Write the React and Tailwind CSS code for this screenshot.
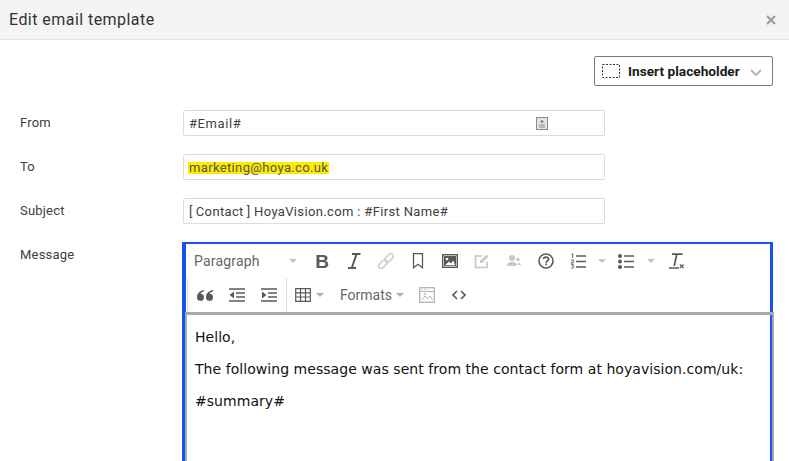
const Caret = ({ light }) => (
  <span className={`block w-0 h-0 border-x-4 border-x-transparent border-t-4 ${light ? 'border-t-[#c4c4c4]' : 'border-t-[#b0b0b0]'}`} />
);

const Ico = ({ children, w = 16, h = 16, cls = 'text-[#595959]' }) => (
  <svg width={w} height={h} viewBox={`0 0 ${w} ${h}`} className={cls} fill="none">
    {children}
  </svg>
);

const ToolBtn = ({ children, w = 'w-8' }) => (
  <div className={`${w} h-[34px] flex items-center justify-center shrink-0`}>{children}</div>
);

const Bold = () => (
  <span className="font-['Liberation_Sans',sans-serif] font-bold text-[19px] leading-none text-[#595959]">B</span>
);

const Italic = () => (
  <Ico w={14} h={16}>
    <path d="M5 1h8.500M1 15h8M9.600 1 4.800 15" stroke="currentColor" strokeWidth="2" />
  </Ico>
);

const LinkIcon = () => (
  <Ico cls="text-[#cfcfcf]">
    <g transform="rotate(-45 8 8)" stroke="currentColor" strokeWidth="1.600">
      <rect x="-1.500" y="5.500" width="10" height="5" rx="2.500" />
      <rect x="7.500" y="5.500" width="10" height="5" rx="2.500" />
    </g>
  </Ico>
);

const Bookmark = () => (
  <Ico w={12} h={16}>
    <path d="M1.500.7h9v14L6 11.200 1.500 14.700z" stroke="currentColor" strokeWidth="1.300" />
  </Ico>
);

const ImageIcon = () => (
  <Ico>
    <rect x="0.700" y="1.700" width="14.600" height="12.600" stroke="currentColor" strokeWidth="1.400" />
    <path d="M2 13V3h12v10z" fill="currentColor" />
    <circle cx="5" cy="6" r="1.300" fill="#fff" />
    <path d="M3 12.200 7 8.500l2 2 2.300-3L13.200 12.200z" fill="#fff" />
  </Ico>
);

const EditIcon = () => (
  <Ico cls="text-[#c8c8c8]">
    <path d="M13 8.500V14.500H1.500V3H8" stroke="currentColor" strokeWidth="1.700" />
    <path d="M6 8 12.500 1.500l2 2L8 10H6z" fill="currentColor" />
  </Ico>
);

const People = () => (
  <Ico cls="text-[#c8c8c8]">
    <circle cx="6" cy="5" r="3" fill="currentColor" />
    <path d="M1 13c0-3 2-4 5-4s5 1 5 4z" fill="currentColor" />
    <circle cx="12" cy="6.500" r="1.800" fill="currentColor" />
    <path d="M12 9.500c2 0 3 1 3 2.500h-3z" fill="currentColor" />
  </Ico>
);

const Help = () => (
  <Ico>
    <circle cx="8" cy="8" r="7" stroke="currentColor" strokeWidth="1.600" />
    <path d="M5.500 6.200C5.700 4.800 6.700 4.200 8 4.200c1.500 0 2.500.8 2.500 2 0 1.800-2.400 1.700-2.400 3.500" stroke="currentColor" strokeWidth="1.700" />
    <rect x="7.200" y="10.500" width="1.800" height="1.800" fill="currentColor" />
  </Ico>
);

const OrderedList = () => (
  <Ico>
    <path d="M6 3h10M6 8.500h10M6 14h10" stroke="currentColor" strokeWidth="1.700" />
    <path d="M1.500 1.500 2.700.7v4.300M1 7h2.500v1.500L1 10h2.700M1 11.700h2.600l-1.300 1.500c1 0 1.500.3 1.500 1 0 .8-1.500 1.200-2.700.8" stroke="currentColor" strokeWidth=".9" />
  </Ico>
);

const BulletList = () => (
  <Ico>
    <path d="M6 3h10M6 8.500h10M6 14h10" stroke="currentColor" strokeWidth="1.700" />
    <circle cx="2" cy="3" r="2" fill="currentColor" />
    <circle cx="2" cy="8.500" r="2" fill="currentColor" />
    <circle cx="2" cy="14" r="2" fill="currentColor" />
  </Ico>
);

const ClearFormat = () => (
  <Ico>
    <path d="M3 1.200h10.500M7.800 1.200 5.200 13M0 15h10" stroke="currentColor" strokeWidth="1.700" />
    <path d="M11 11.500l3.500 3.500M14.500 11.500 11 15" stroke="currentColor" strokeWidth="1.200" />
  </Ico>
);

const Quote = () => (
  <Ico w={18} h={14}>
    <path d="M8 2C4.500 2.500 1 5 1 9a3.500 3.500 0 1 0 3.500-3.200c.6-1.300 2-2.200 3.500-2.600zM17 2c-3.500.5-7 3-7 7a3.500 3.500 0 1 0 3.500-3.200c.6-1.300 2-2.200 3.500-2.600z" fill="currentColor" />
  </Ico>
);

const Outdent = () => (
  <Ico>
    <path d="M0 2h16M7 6h9M7 10h9M0 14h16" stroke="currentColor" strokeWidth="1.700" />
    <path d="M5 4.500v7L.5 8z" fill="currentColor" />
  </Ico>
);

const Indent = () => (
  <Ico>
    <path d="M0 2h16M7 6h9M7 10h9M0 14h16" stroke="currentColor" strokeWidth="1.700" />
    <path d="M1 4.500v7L5.500 8z" fill="currentColor" />
  </Ico>
);

const TableIcon = () => (
  <Ico>
    <path d="M.7 1.700h14.600v12.600H.7zM.7 5.800h14.600M.7 10h14.600M5.500 1.700v12.600M10.500 1.700v12.600" stroke="currentColor" strokeWidth="1.200" />
  </Ico>
);

const PlaceholderImage = () => (
  <Ico cls="text-[#b4b4b4]">
    <rect x="0.700" y="0.700" width="14.600" height="14.600" stroke="currentColor" strokeWidth="1.300" />
    <path d="M1 4.500h14" stroke="currentColor" />
    <path d="M2.500 2.500h1M5 2.500h1M7.500 2.500h1" stroke="currentColor" />
    <path d="M2.500 13 6 9l2.500 2.500L11 9l2.500 4" stroke="currentColor" />
    <circle cx="6" cy="7" r="1" stroke="currentColor" strokeWidth=".8" />
  </Ico>
);

const CodeIcon = () => (
  <Ico w={14} h={10}>
    <path d="M5 1 1 5l4 4M9 1l4 4-4 4" stroke="currentColor" strokeWidth="1.600" />
  </Ico>
);

const FieldRow = ({ label, children }) => (
  <div className="flex">
    <div className="w-[183px] pl-5 text-[13px] leading-[26px] text-[#404040] tracking-[0.2px]">{label}</div>
    {children}
  </div>
);

const Field = ({ children }) => (
  <div className="w-[422px] h-[26px] border border-[#dcdcdc] rounded-[2px] pl-[5px] pt-px flex items-center text-[13px] text-[#404040] tracking-[0.35px]">
    {children}
  </div>
);

export default function App() {
  return (
    <div className="w-[789px] h-[461px] overflow-hidden bg-white font-['Roboto',sans-serif]">
      <div className="h-10 bg-[#f4f4f4] border-b border-[#e2e2e2] flex items-center justify-between pl-[9px] pr-[13px]">
        <h1 className="text-[16px] text-[#333] tracking-[0.45px] pt-px">Edit email template</h1>
        <svg width="10" height="10" viewBox="0 0 10 10" className="text-[#8f9aa3]">
          <path d="M1 1l8 8M9 1 1 9" stroke="currentColor" strokeWidth="2" />
        </svg>
      </div>

      <div className="flex justify-end pr-4 pt-4 h-[70px]">
        <div className="w-[179px] h-[30px] border border-[#7a7a7a] rounded-[2px] flex items-center pl-[7px] pr-[10px]">
          <svg width="18" height="14" viewBox="0 0 18 14" className="mr-2 shrink-0 text-[#333]">
            <rect x="0.500" y="0.500" width="17" height="13" fill="none" stroke="currentColor" strokeDasharray="2 1.500" />
          </svg>
          <span className="text-[13.700px] font-bold text-[#1a1a1a] whitespace-nowrap">Insert placeholder</span>
          <svg width="12" height="8" viewBox="0 0 12 8" className="ml-auto mt-[3px] text-[#b5b5b5]">
            <path d="M1 1l5 5 5-5" stroke="currentColor" strokeWidth="2" fill="none" />
          </svg>
        </div>
      </div>

      <div className="flex flex-col gap-[18px]">
        <FieldRow label="From">
          <Field>
            <span className="tracking-[0.6px]">#Email#</span>
            <svg width="12" height="13" viewBox="0 0 12 13" className="ml-[295px] text-[#8a8a8a]">
              <rect x="0.500" y="0.500" width="11" height="12" fill="#e4e4e4" stroke="currentColor" />
              <circle cx="6" cy="4.500" r="1.500" fill="currentColor" />
              <path d="M3 7.500h6v1H3zM3 9.500h6v1H3z" fill="currentColor" />
            </svg>
          </Field>
        </FieldRow>
        <FieldRow label="To">
          <Field>
            <span className="inline-block -ml-px px-px leading-[12px] bg-[#ffea00] text-[#555]">marketing@hoya.co.uk</span>
          </Field>
        </FieldRow>
        <FieldRow label="Subject">
          <Field>
            <span>[{'\u2009'}Contact{'\u2009'}] HoyaVision.com : #First Name#</span>
          </Field>
        </FieldRow>

        <FieldRow label="Message">
          <div className="w-[591px] h-[219px] shrink-0 border-t-2 border-l-4 border-r-[3px] border-[#1553f0] -ml-px">
            <div className="flex h-[34px] pl-[8px] text-[#595959]">
              <div className="w-[112px] flex items-center text-[14px] text-[#666] tracking-[0.2px]">
                <span>Paragraph</span>
                <span className="ml-auto mr-[9px]"><Caret light /></span>
              </div>
              <ToolBtn><Bold /></ToolBtn>
              <ToolBtn><Italic /></ToolBtn>
              <ToolBtn><LinkIcon /></ToolBtn>
              <ToolBtn><Bookmark /></ToolBtn>
              <ToolBtn><ImageIcon /></ToolBtn>
              <ToolBtn><EditIcon /></ToolBtn>
              <ToolBtn><People /></ToolBtn>
              <ToolBtn><Help /></ToolBtn>
              <ToolBtn><OrderedList /></ToolBtn>
              <ToolBtn w="w-[15px]"><Caret light /></ToolBtn>
              <ToolBtn w="w-[34px]"><BulletList /></ToolBtn>
              <ToolBtn w="w-[15px]"><Caret light /></ToolBtn>
              <ToolBtn w="w-[38px]"><ClearFormat /></ToolBtn>
            </div>
            <div className="flex h-[34px] items-center">
              <div className="w-[1px] h-full bg-[#e0e0e0] ml-[1px]" />
              <div className="flex items-center w-[98px] pl-px">
                <ToolBtn w="w-[32px]"><Quote /></ToolBtn>
                <ToolBtn><Outdent /></ToolBtn>
                <ToolBtn><Indent /></ToolBtn>
              </div>
              <div className="w-[1px] h-full bg-[#e0e0e0]" />
              <div className="flex items-center pl-[8px]">
                <TableIcon />
                <span className="ml-[5px]"><Caret /></span>
                <span className="ml-[16px] text-[14px] text-[#666]">Formats</span>
                <span className="ml-1"><Caret /></span>
                <span className="ml-[15px] flex"><PlaceholderImage /></span>
                <span className="ml-[17px] flex"><CodeIcon /></span>
              </div>
            </div>
            <div className="h-[200px] w-[589px] -ml-px border-t-[3px] border-x-2 border-[#a8a8a8] pl-[8px] pt-[13px] font-['DejaVu_Sans',sans-serif] text-[14px] leading-[18px] tracking-[0.05px] text-[#111] flex flex-col gap-[14px]">
              <p className="whitespace-nowrap">Hello,</p>
              <p className="whitespace-nowrap">The following message was sent from the contact form at hoyavision.com/uk:</p>
              <p className="whitespace-nowrap">#summary#</p>
            </div>
          </div>
        </FieldRow>
      </div>
    </div>
  );
}
